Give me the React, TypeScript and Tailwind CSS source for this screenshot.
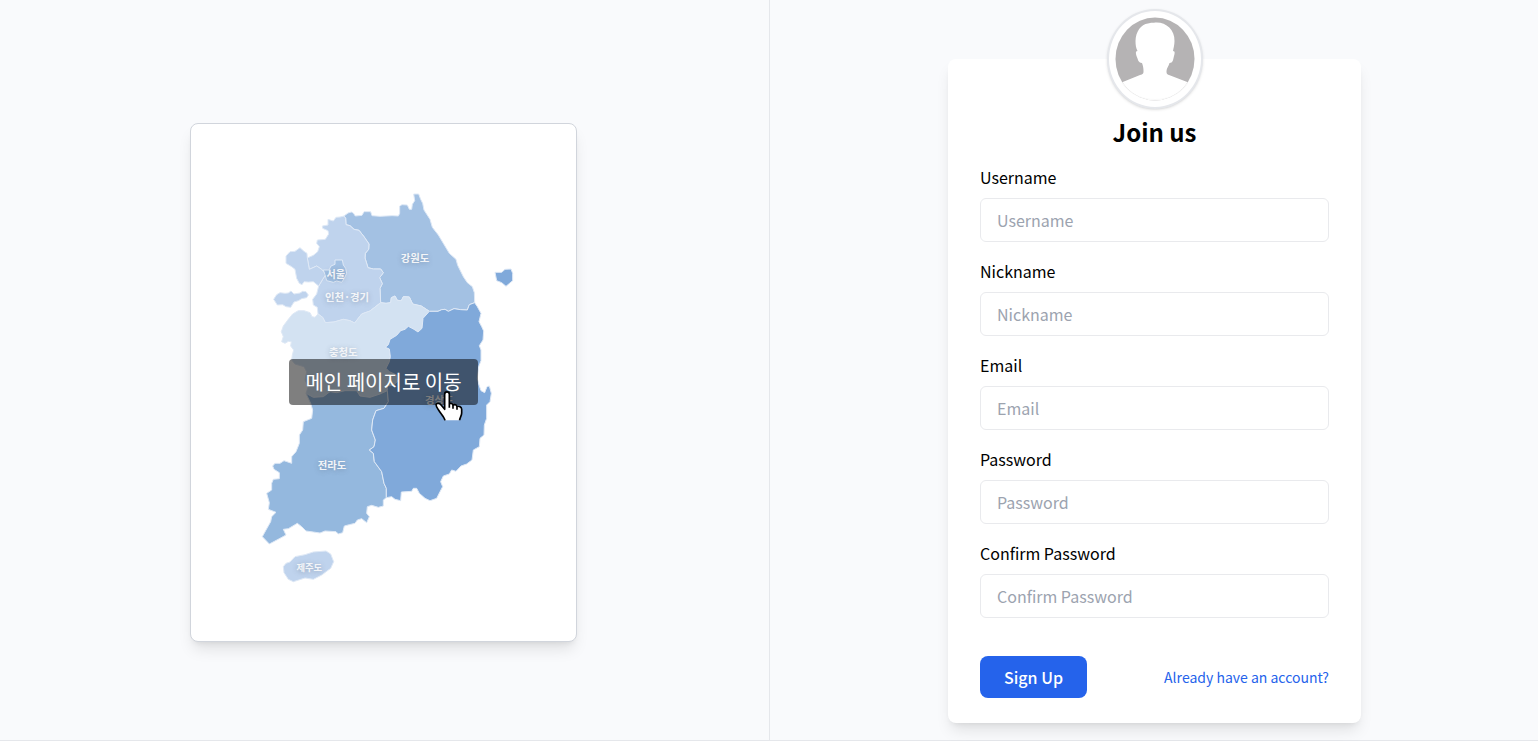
const MAP_LABELS = [
  { name: "강원도", x: 705, y: 456, size: 31 },
  { name: "서울", x: 467, y: 504, size: 30 },
  { name: "인천·경기", x: 501, y: 572, size: 31 },
  { name: "충청도", x: 490, y: 738, size: 31 },
  { name: "경상도", x: 778, y: 882, size: 31 },
  { name: "전라도", x: 456, y: 1077, size: 31 },
  { name: "제주도", x: 388, y: 1384, size: 28 },
];

const REGIONS = [
  {
    id: "gangwon",
    fill: "#a3c1e3",
    d: "M492 318L504 309L514 306L520 309L526 318L546 316L552 305L572 305L576 317L600 319L636 317L655 318L659 310L659 288L666 284L682 285L688 298L695 298L697 283L704 272L701 252L716 252L722 268L728 280L732 300L750 328L757 352L775 375L808 430L828 448L833 466L850 500L862 518L877 530L883 548L884 578L868 584L862 600L842 599L822 596L805 604L795 598L785 599L774 604L748 604L724 588L698 582L688 561L670 560L664 572L652 571L645 558L634 563L632 578L618 580L602 578L600 535L607 521L599 503L610 488L602 477L580 477L564 473L555 444L556 430L566 418L567 402L552 380L537 361L522 358L510 347L498 344L497 325Z",
  },
  {
    id: "gyeonggi",
    fill: "#bfd3ed",
    d: "M492 318L480 321L468 322L460 333L444 328L444 345L427 348L428 355L444 362L446 372L436 388L412 390L410 400L418 410L413 425L400 436L382 444L388 478L410 468L425 478L438 493L428 508L416 528L410 552L398 568L400 585L412 592L414 612L428 622L436 638L462 636L490 628L510 632L524 639L545 612L570 603L602 578L600 535L607 521L599 503L610 488L602 477L580 477L564 473L555 444L556 430L566 418L567 402L552 380L537 361L522 358L510 347L498 344L497 325Z",
  },
  {
    id: "incheon",
    fill: "#bfd3ed",
    d: "M318 460L318 438L330 425L345 424L360 413L372 424L381 430L382 444L388 478L410 468L425 478L438 493L428 508L416 528L400 515L385 516L372 515L366 524L358 520L350 505L345 478L335 470Z",
  },
  {
    id: "incheon-islands",
    fill: "#bfd3ed",
    d: "M281 568L290 554L300 548L315 550L325 549L333 543L342 552L360 549L368 544L378 545L385 555L380 563L365 566L355 572L342 576L332 592L318 590L308 584L292 585Z",
  },
  {
    id: "seoul",
    fill: "#a3c1e3",
    d: "M430 480L447 480L453 468L465 463L465 450L487 450L490 465L497 475L500 490L493 505L485 517L470 513L460 517L440 512L435 494Z",
  },
  {
    id: "chungcheong",
    fill: "#d3e2f2",
    d: "M414 612L428 622L436 638L462 636L490 628L510 632L524 639L545 612L570 603L602 578L618 580L632 578L634 563L645 558L652 571L664 572L670 560L688 561L698 582L724 588L748 604L729 625L726 655L714 666L702 658L685 649L675 658L662 662L650 676L630 688L625 704L616 712L628 717L631 740L628 755L618 775L628 785L650 795L652 815L640 826L622 828L622 842L600 852L570 862L540 858L530 842L495 842L470 848L450 845L430 860L400 862L378 850L385 830L375 810L380 785L372 770L345 762L335 750L337 735L341 720L332 708L334 695L325 694L315 700L305 695L310 680L304 665L310 648L325 628L338 612L355 602L372 602L390 608L396 620L405 622Z",
  },
  {
    id: "jeolla",
    fill: "#94b8de",
    d: "M619 1163L610 1170L610 1188L595 1192L575 1186L562 1190L560 1210L568 1220L560 1238L545 1226L532 1230L525 1240L508 1244L493 1248L488 1268L475 1272L468 1265L435 1263L420 1269L400 1266L378 1263L365 1250L352 1240L325 1256L310 1258L318 1275L300 1285L268 1302L247 1280L258 1260L272 1235L275 1220L288 1207L265 1198L268 1178L260 1150L275 1140L275 1120L280 1108L298 1106L298 1088L282 1078L278 1068L285 1060L300 1060L312 1052L335 1060L335 1040L348 1025L358 1000L358 975L368 960L370 935L395 925L398 900L392 880L378 850L400 862L430 860L450 845L470 848L495 842L530 842L540 858L570 862L600 852L622 842L625 875L612 895L588 902L578 930L575 960L586 990L582 1010L568 1020L580 1030L583 1055L605 1085L612 1120L619 1135Z",
  },
  {
    id: "gyeongsang",
    fill: "#80a9da",
    d: "M748 604L774 604L785 599L795 598L805 604L822 596L842 599L862 600L868 584L884 578L892 590L903 610L897 635L905 650L911 663L909 690L898 707L903 720L903 752L896 770L892 805L897 825L903 842L914 848L921 830L928 828L934 850L930 875L920 885L920 925L913 945L912 975L900 985L898 1010L880 1020L876 1050L860 1062L843 1068L828 1084L815 1080L808 1092L790 1098L782 1115L788 1130L780 1145L770 1165L750 1172L735 1165L718 1150L710 1135L700 1135L695 1144L664 1146L662 1172L645 1168L635 1160L619 1163L619 1135L612 1120L605 1085L583 1055L580 1030L568 1020L582 1010L586 990L575 960L578 930L588 902L612 895L625 875L622 842L622 828L640 826L652 815L650 795L628 785L618 775L628 755L631 740L628 717L616 712L625 704L630 688L650 676L662 662L675 658L685 649L702 658L714 666L726 655L729 625Z",
  },
  {
    id: "ulleung",
    fill: "#80a9da",
    d: "M945 487L965 487L975 478L993 477L998 490L998 512L978 529L965 518L950 512Z",
  },
  {
    id: "jeju",
    fill: "#bfd3ed",
    d: "M310 1370L318 1360L330 1356L345 1340L375 1334L400 1326L438 1323L452 1332L461 1355L452 1375L425 1395L400 1408L375 1404L340 1415L325 1408L312 1388Z",
  },
];

const FIELDS = [
  { id: "username", label: "Username", type: "text" },
  { id: "nickname", label: "Nickname", type: "text" },
  { id: "email", label: "Email", type: "email" },
  { id: "password", label: "Password", type: "password" },
  { id: "confirm-password", label: "Confirm Password", type: "password" },
];

function KoreaMap() {
  return (
    <svg viewBox="33 42 1155 1551" className="block h-auto w-full" role="img" aria-label="대한민국 지도">
      {REGIONS.map((r) => (
        <path key={r.id} d={r.d} fill={r.fill} stroke="#dfe9f6" strokeWidth="3" strokeLinejoin="round" />
      ))}
      {MAP_LABELS.map((l) => (
        <text
          key={l.name}
          x={l.x}
          y={l.y}
          fontSize={l.size}
          textAnchor="middle"
          className="fill-[#f3f5f8] font-bold [text-shadow:0_1px_5px_rgba(70,80,100,0.35)]"
        >
          {l.name}
        </text>
      ))}
    </svg>
  );
}

function HandPointer() {
  return (
    <svg viewBox="0 0 84 90" className="absolute top-8 left-[146px] h-[30px] w-7" aria-hidden="true">
      <path
        d="M30 88C28 78 17 68 10 56C6 50 1 43 4 39C8 35 15 38 19 43L29 55V10C29 0 43 0 43 10V39C46 35 53 37 54 43C58 39 65 41 66 47C71 44 80 47 80 55V66C80 75 74 80 74 88Z"
        fill="#fff"
      />
      <path
        d="M30 88C28 78 17 68 10 56C6 50 1 43 4 39C8 35 15 38 19 43L29 55V10C29 0 43 0 43 10V50M43 39C46 35 54 37 54 44V53M54 43C58 39 66 41 66 48V56M66 47C71 44 80 47 80 55V66C80 75 74 80 74 88"
        fill="none"
        stroke="#000"
        strokeWidth="5"
        strokeLinecap="butt"
        strokeLinejoin="round"
      />
    </svg>
  );
}

function Avatar() {
  return (
    <div className="mx-auto -mt-[50px] h-[100px] w-24 rounded-[50%] border-2 border-gray-200 bg-white p-1.5 shadow-sm">
      <svg viewBox="0 0 80 84" className="block h-full w-full" role="img" aria-label="Profile">
        <defs>
          <clipPath id="avatar-clip">
            <ellipse cx="40" cy="42" rx="39.5" ry="41.5" />
          </clipPath>
        </defs>
        <g clipPath="url(#avatar-clip)">
          <rect width="80" height="84" fill="#b5b3b4" />
          <path
            d="M40 5.500C50 4.500 60 12 59.500 24C59.500 28 58.500 31 58 34C60.500 34 59.500 37 59 39C58 43 58 46 54.500 46C54 49 51.500 51 51.500 54C51.500 57 52 57 54 58L73.500 65.500C80 75 60 84 40 84C20 84 0 75 6.500 65.500L25 58C28 57 28.500 57 28.500 54C28.500 51 28 49 27 46C23 46 23 42 21.500 39C21 37 20 34 22.500 34C21 31 20.500 28 20.500 24C20.500 15 26 7 33 6.500C36 5 38 6 40 5.500Z"
            fill="#fff"
          />
        </g>
        <path d="M7 66C21 88 59 88 73 66" fill="none" stroke="#f3f3f3" strokeWidth="0.500" />
      </svg>
    </div>
  );
}

export default function App() {
  return (
    <main className="grid min-h-screen grid-cols-2 border-b border-gray-200 bg-[#f9fafc] font-['Noto_Sans_CJK_KR','Noto_Sans',sans-serif] text-base text-black">
      <section className="flex items-center justify-center pt-6 pr-0.5">
        <a
          href="#main"
          className="relative block w-full max-w-[387px] overflow-hidden rounded-lg border border-gray-300 bg-white shadow-lg"
        >
          <KoreaMap />
          <span className="absolute inset-0 flex items-center justify-center">
            <span className="relative rounded bg-black/50 px-4 py-2 text-[20px] leading-[30px] whitespace-nowrap text-white">
              메인 페이지로 이동
              <HandPointer />
            </span>
          </span>
        </a>
      </section>

      <section className="flex items-start justify-center border-l border-gray-200 pt-[59px] pb-4 pl-px">
        <div className="w-full max-w-[413px] rounded-lg bg-white px-8 pb-[25px] shadow-lg">
          <Avatar />
          <h1 className="mt-[7px] text-center text-2xl font-bold">Join us</h1>
          <form className="mt-[17px]" onSubmit={(e) => e.preventDefault()}>
            <div className="flex flex-col gap-[17px]">
              {FIELDS.map((f) => (
                <div key={f.id} className="flex flex-col gap-[9px]">
                  <label htmlFor={f.id} className="leading-6">
                    {f.label}
                  </label>
                  <input
                    id={f.id}
                    type={f.type}
                    placeholder={f.label}
                    className="h-11 w-full rounded-md border border-[#e9eaed] bg-white px-4 outline-none placeholder:text-[#9ca3af]"
                  />
                </div>
              ))}
            </div>
            <div className="mt-[38px] flex items-center justify-between">
              <button type="submit" className="h-[42px] rounded-lg bg-[#2563eb] px-6 font-medium text-white">
                Sign Up
              </button>
              <a href="#login" className="text-sm text-[#2563eb]">
                Already have an account?
              </a>
            </div>
          </form>
        </div>
      </section>
    </main>
  );
}
